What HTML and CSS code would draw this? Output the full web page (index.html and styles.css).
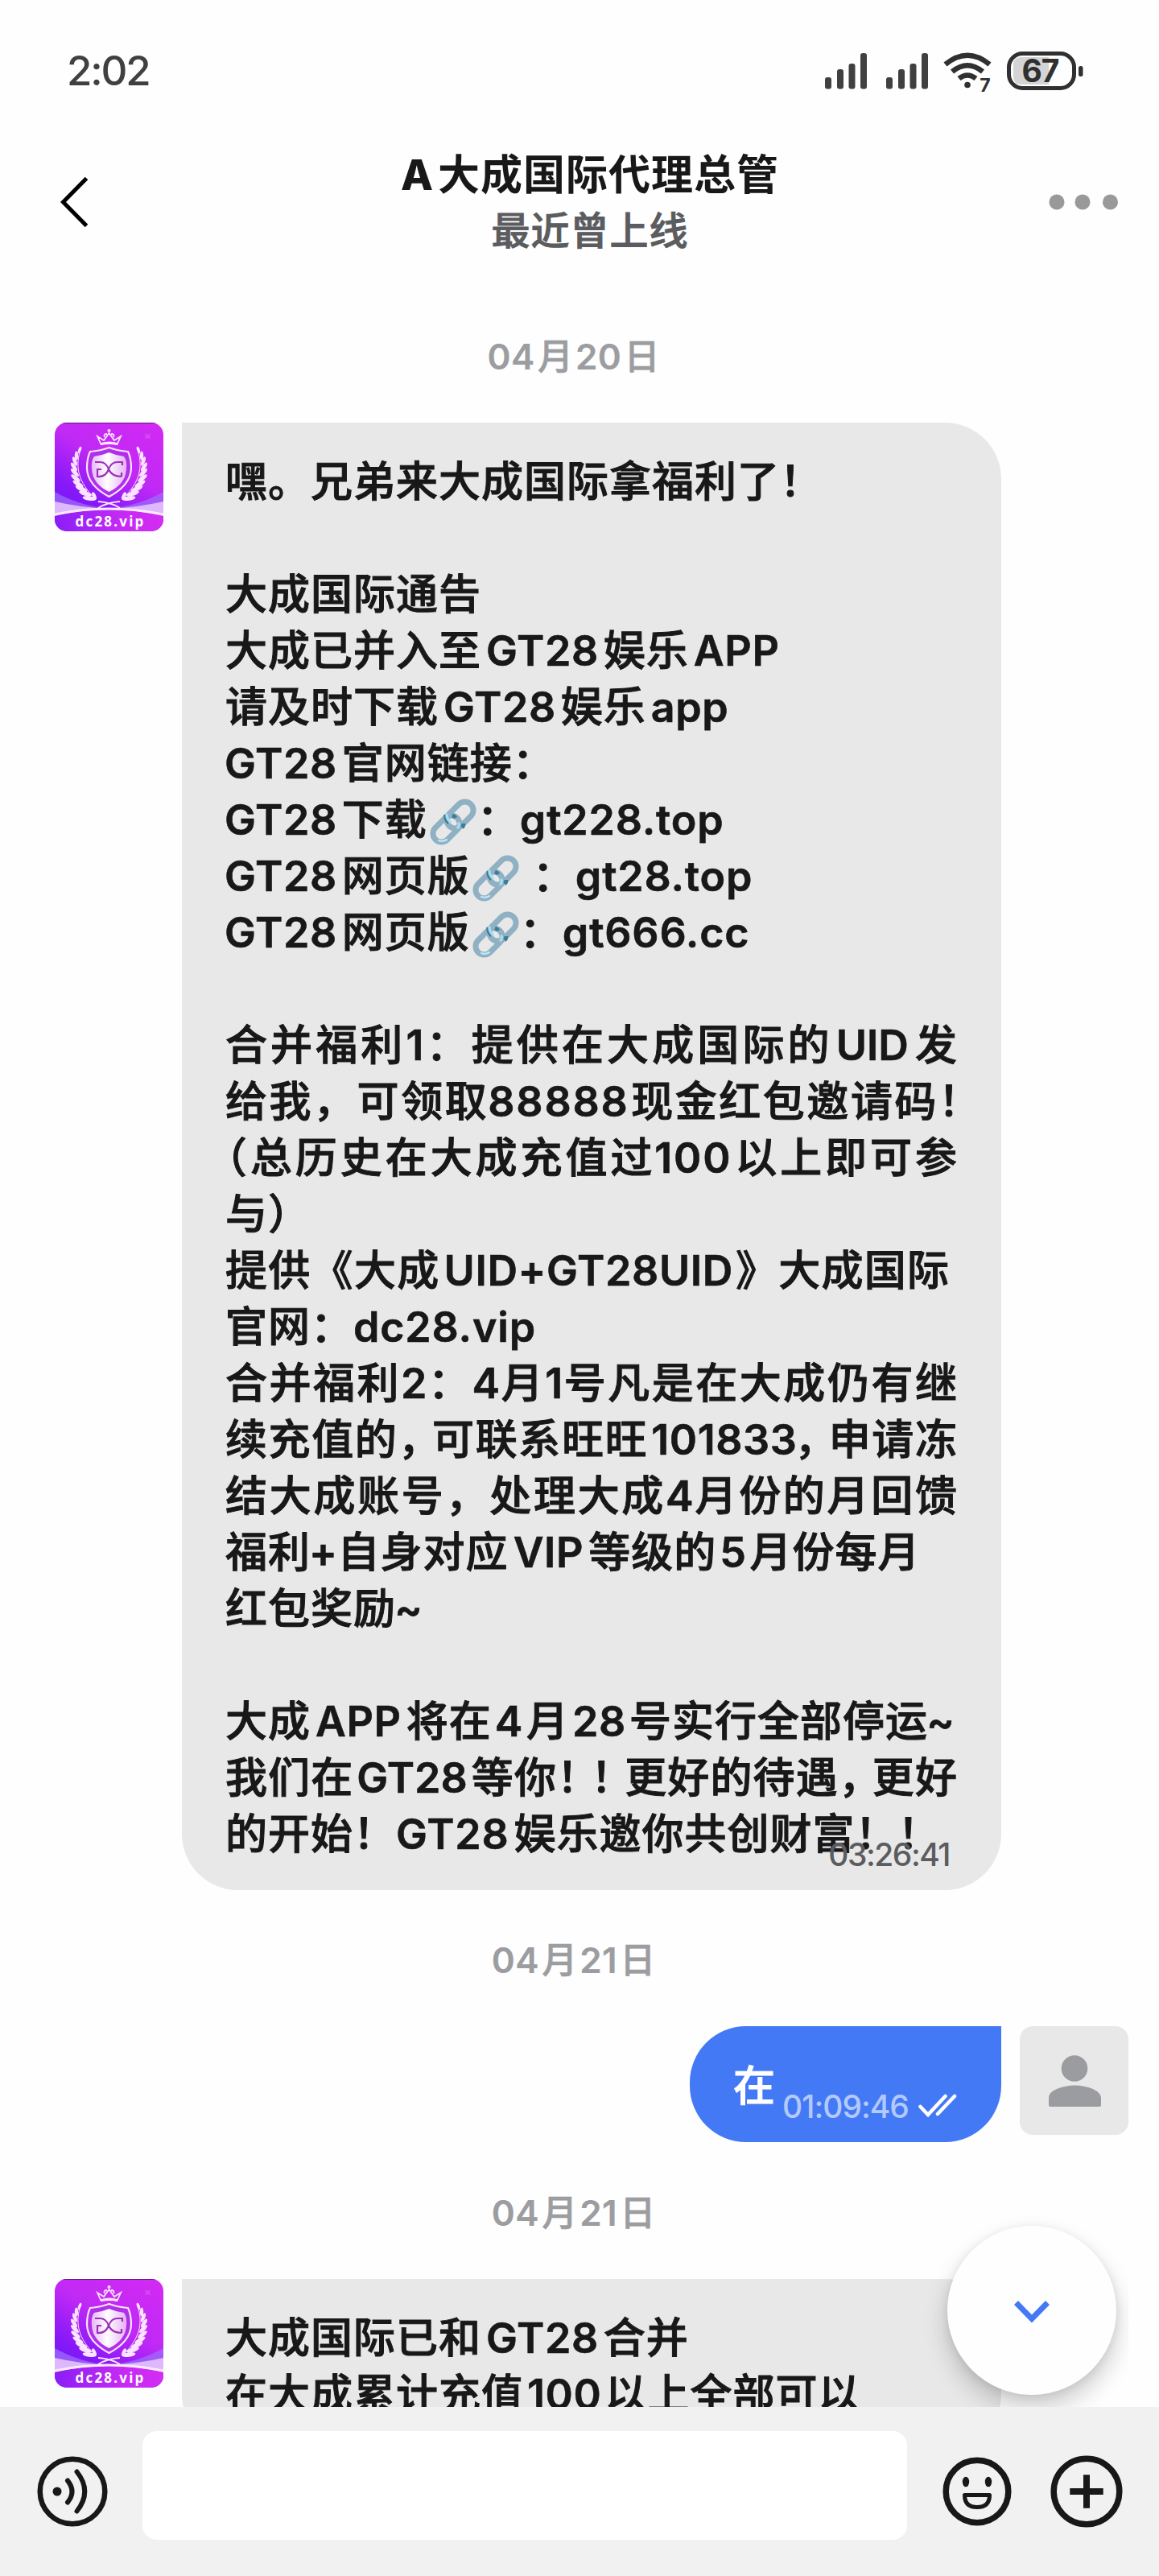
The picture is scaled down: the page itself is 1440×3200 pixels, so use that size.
FILE: index.html
```html
<!DOCTYPE html>
<html lang="zh-CN">
<head>
<meta charset="utf-8">
<title>A大成国际代理总管</title>
<link rel="stylesheet" href="styles.css">
</head>
<body>
<svg class="defs" width="0" height="0" aria-hidden="true">
  <defs>
    <linearGradient id="bg" x1="0.8" y1="0" x2="0.2" y2="1"><stop offset="0" stop-color="#d02af4"/><stop offset="0.4" stop-color="#c029f5"/><stop offset="0.75" stop-color="#8418f8"/><stop offset="1" stop-color="#6a1cfa"/></linearGradient>
    <linearGradient id="foot" x1="0" y1="0" x2="1" y2="0"><stop offset="0" stop-color="#8a1ef8"/><stop offset="0.6" stop-color="#c42af4"/><stop offset="1" stop-color="#d42cf2"/></linearGradient>
    <linearGradient id="metal" x1="0" y1="0" x2="1" y2="0"><stop offset="0" stop-color="#e8b8fa"/><stop offset="0.45" stop-color="#ffffff"/><stop offset="1" stop-color="#e6b0f6"/></linearGradient>
    <clipPath id="round"><rect width="135" height="135" rx="15"/></clipPath>
    <symbol id="laurel" viewBox="0 0 135 135">
      <g fill="#fbe4ff">
        <ellipse cx="31" cy="34" rx="1.8" ry="4.5" transform="rotate(20 31 34)"/>
        <ellipse cx="27" cy="41" rx="2.2" ry="5.5" transform="rotate(-2 27 41)"/>
        <ellipse cx="25" cy="48" rx="2.3" ry="6" transform="rotate(-22 25 48)"/>
        <ellipse cx="24" cy="55" rx="2.4" ry="6.3" transform="rotate(-34 24 55)"/>
        <ellipse cx="25" cy="62" rx="2.5" ry="6.6" transform="rotate(-45 25 62)"/>
        <ellipse cx="26" cy="69" rx="2.6" ry="7" transform="rotate(-52 26 69)"/>
        <ellipse cx="29" cy="76" rx="2.7" ry="7.4" transform="rotate(-59 29 76)"/>
        <ellipse cx="33" cy="82" rx="2.8" ry="8" transform="rotate(-65 33 82)"/>
        <ellipse cx="38" cy="88" rx="2.9" ry="8.2" transform="rotate(-72 38 88)"/>
        <ellipse cx="43" cy="94" rx="2.9" ry="8.5" transform="rotate(-82 43 94)"/>
        <ellipse cx="49" cy="91" rx="2.2" ry="5" transform="rotate(-25 49 91)"/>
      </g>
      <path d="M31 37C26 55 29 74 50 94" fill="none" stroke="#fbe4ff" stroke-width="1"/>
    </symbol>
    <symbol id="badge" viewBox="0 0 135 135">
      <g clip-path="url(#round)">
        <rect width="135" height="135" fill="url(#bg)"/>
        <path d="M0 86Q30 103 67 107Q105 103 135 86V116H0Z" fill="#9e6cfa" opacity=".75"/>
        <path d="M0 98Q30 105 67 107Q105 105 135 98V116H0Z" fill="#ddb8fc"/>
        <path d="M0 116Q67 100 135 116V135H0Z" fill="url(#foot)"/>
        <path d="M0 114Q67 100 135 114" fill="none" stroke="#fbe9ff" stroke-width="3"/>
        <rect x="10" width="115" height="1" fill="#5b1a78"/>
      </g>
      <path d="M112 13l4 2 3-2-1 4 1 3-4-1-3 1 1-3z" fill="#d95af6" opacity=".6"/>
      <use href="#laurel" width="135" height="135"/>
      <use href="#laurel" width="135" height="135" transform="translate(135 0) scale(-1 1)"/>
      <path d="M54 98Q70 99 81 106M81 98Q65 99 54 106" fill="none" stroke="#fbe4ff" stroke-width="2"/>
      <path d="M67.500 31Q78 35 91 36Q95 44 95 57Q94 78 67.500 92Q41 78 40 57Q40 44 44 36Q57 35 67.500 31Z" fill="#b030ea" stroke="#fbe4ff" stroke-width="2.200"/>
      <path d="M67.500 37Q77 41 86 42Q90 47 89 58Q88 76 67.500 86Q47 76 46 58Q45 47 49 42Q58 41 67.500 37Z" fill="url(#metal)"/>
      <g fill="none" stroke="#9b30b8" stroke-width="2.200"><path d="M50 49H56Q64 49 67 58Q71 67 83 67M84 53V49H78Q70 49 67 58Q63 68 53 67V58H58M83 67V62"/></g>
      <g fill="none" stroke="#fbe4ff" stroke-width="1.800"><path d="M53 17l4 9q11-3 21 0l4-9-8 5-6.500-9-6.500 9zM57 27.500q11-3 21 0M62 18q-2-4 3-4M73 18q2-4-3-4"/></g>
      <circle cx="67.500" cy="10" r="2" fill="#fbe4ff"/>
      <text class="badge-text" x="69" y="129" text-anchor="middle">dc28.vip</text>
    </symbol>
    <symbol id="link" viewBox="0 0 58 58">
      <g fill="none" stroke-linecap="round">
        <rect x="-10.500" y="-19" width="21" height="38" rx="10.500" transform="translate(20.500 37.500) rotate(45)" stroke="#8fb1c3" stroke-width="7"/>
        <rect x="-10.500" y="-19" width="21" height="38" rx="10.500" transform="translate(37.500 20.500) rotate(45)" stroke="#8fb1c3" stroke-width="7"/>
        <path d="M28 21q3 1 4 3M42 31q0 3-2 5" stroke="#3e7c93" stroke-width="5" stroke-linecap="butt"/>
        <path d="M20 20q-1 6 4 10" stroke="#3e7c93" stroke-width="5" stroke-linecap="butt"/>
        <path d="M21 20q0 5 4 9M36 31q1 3-1 5" stroke="#a5dcee" stroke-width="3.500"/>
        <path d="M11 52q5 2 10-1" stroke="#bde9f7" stroke-width="2.200"/>
      </g>
    </symbol>
  </defs>
</svg>

<main class="phone">
  <div class="status">
    <span class="clock">2:02</span>
    <svg width="340" height="60" viewBox="1015 58 340 60">
      <g fill="#404040">
        <rect x="1025" y="96" width="8" height="14.500" rx="3"/><rect x="1040" y="86" width="8" height="24.500" rx="3"/><rect x="1054.500" y="79" width="8" height="31.500" rx="3"/><rect x="1069" y="66" width="8" height="44.500" rx="3"/>
        <rect x="1101" y="96" width="8" height="14.500" rx="3"/><rect x="1116" y="86" width="8" height="24.500" rx="3"/><rect x="1130.500" y="79" width="8" height="31.500" rx="3"/><rect x="1145" y="66" width="8" height="44.500" rx="3"/>
      </g>
      <g fill="none" stroke="#303030" stroke-width="6.500"><path d="M1174.500 80Q1202 57.500 1229.500 80M1183 89Q1202 73.500 1221 89M1191.500 97.500Q1202 89.500 1212.500 97.500"/></g>
      <circle cx="1202" cy="105.500" r="3.800" fill="#303030"/>
      <text class="wifi-gen" x="1224" y="113.500" text-anchor="middle">7</text>
      <path d="M1269 71H1303V105H1269Q1259 105 1259 95V81Q1259 71 1269 71Z" fill="#d4d4d4"/>
      <rect x="1253.500" y="66.500" width="81" height="43" rx="17" fill="none" stroke="#303030" stroke-width="5"/>
      <rect x="1340" y="82" width="5.500" height="13" rx="2.500" fill="#303030"/>
      <text class="battery-level" x="1292.500" y="102" text-anchor="middle">67</text>
    </svg>
  </div>

  <header class="header">
    <svg class="back" width="50" height="70" viewBox="70 215.500 50 70"><path d="M107.500 221L78.500 250.500L107.500 280" fill="none" stroke="#000" stroke-width="5"/></svg>
    <div class="titles">
      <h1><span class="la">A</span>大成国际代理总管</h1>
      <p>最近曾上线</p>
    </div>
    <svg width="100" height="30" viewBox="1300 235.500 100 30" fill="#999"><circle cx="1313" cy="250.500" r="9.500"/><circle cx="1345" cy="250.500" r="9.500"/><circle cx="1379.500" cy="250.500" r="9.500"/></svg>
  </header>

  <section class="chat">
    <div class="date"><b>04</b>月<b>20</b>日</div>
    <div class="row">
      <svg class="avatar" width="135" height="135"><use href="#badge"/></svg>
      <div class="bubble">
        <p>嘿。兄弟来大成国际拿福利了！</p>
        <p></p>
        <p>大成国际通告</p>
        <p>大成已并入至<b>GT28</b>娱乐<b>APP</b></p>
        <p>请及时下载<b>GT28</b>娱乐<b>app</b></p>
        <p><b class="first">GT28</b>官网链接：</p>
        <p><b class="first">GT28</b>下载<svg class="link"><use href="#link"/></svg>：<b class="url">gt228.top</b></p>
        <p><b class="first">GT28</b>网页版<svg class="link spaced"><use href="#link"/></svg>：<b class="url">gt28.top</b></p>
        <p><b class="first">GT28</b>网页版<svg class="link"><use href="#link"/></svg>：<b class="url">gt666.cc</b></p>
        <p></p>
        <p class="full">合并福利<b class="digit">1</b>：提供在大成国际的<b>UID</b>发</p>
        <p class="full hang">给我，可领取<b class="wide">88888</b>现金红包邀请码！</p>
        <p class="full"><span class="open">（</span>总历史在大成充值过<b class="wide">100</b>以上即可参</p>
        <p>与）</p>
        <p class="spread">提供《大成<b>UID+GT28UID</b>》大成国际</p>
        <p>官网：<b class="url">dc28.vip</b></p>
        <p class="full">合并福利<b class="digit">2</b>：<b class="digit">4</b>月<b class="digit">1</b>号凡是在大成仍有继</p>
        <p class="full">续充值的<span class="tight">，</span>可联系旺旺<b class="number">101833</b><span class="tight">，</span>申请冻</p>
        <p class="full">结大成账号，处理大成<b class="digit">4</b>月份的月回馈</p>
        <p>福利<b class="sign">+</b>自身对应<b>VIP</b>等级的<b class="digit">5</b>月份每月</p>
        <p>红包奖励<b class="sign">~</b></p>
        <p></p>
        <p>大成<b>APP</b>将在<b class="digit">4</b>月<b class="digit">28</b>号实行全部停运<b class="sign">~</b></p>
        <p class="full">我们在<b>GT28</b>等你<span class="tight">！</span><span class="tight">！</span>更好的待遇<span class="tight">，</span>更好</p>
        <p>的开始！<b class="url">GT28</b>娱乐邀你共创财富！！</p>
        <time>03:26:41</time>
      </div>
    </div>

    <div class="date"><b>04</b>月<b>21</b>日</div>
    <div class="row mine">
      <div class="bubble">
        <p>在</p>
        <time>01:09:46</time>
        <svg class="ticks" width="48" height="30" viewBox="1141 2601 48 30" fill="none" stroke="#fff" stroke-width="4.500" stroke-linecap="round"><path d="M1143.500 2617L1153 2627L1174.500 2604M1165 2626L1186 2604"/></svg>
      </div>
      <svg class="avatar" width="135" height="135" viewBox="1267 2518 135 135"><rect x="1267" y="2518" width="135" height="135" rx="16" fill="#e8e8e8"/><g fill="#9b9ca0"><ellipse cx="1335" cy="2570.500" rx="16.300" ry="16.300"/><path d="M1303 2607Q1303 2600 1313 2596Q1335 2587 1358 2596Q1368 2601 1368 2607V2616Q1368 2618 1366 2618H1305Q1303 2618 1303 2616Z"/></g></svg>
    </div>

    <div class="date"><b>04</b>月<b>21</b>日</div>
    <div class="row">
      <svg class="avatar" width="135" height="135"><use href="#badge"/></svg>
      <div class="bubble">
        <p>大成国际已和<b>GT28</b>合并</p>
        <p>在大成累计充值<b class="digit">100</b>以上全部可以</p>
      </div>
    </div>
    <div class="jump-area">
      <button class="jump"><svg width="50" height="32" viewBox="1257 2853 50 32"><path d="M1262.500 2859.500L1282 2879.500L1301.500 2859.500" fill="none" stroke="#4478f4" stroke-width="7"/></svg></button>
    </div>
  </section>

  <footer class="composer">
    <svg width="90" height="90" viewBox="45 3050 90 90" fill="none" stroke="#181818"><circle cx="90" cy="3095" r="40.300" stroke-width="6.500"/><circle cx="71" cy="3095" r="5.500" fill="#181818" stroke="none"/><path d="M84 3081.500Q95 3095 84 3108.500M95.500 3070.500Q115 3095 95.500 3119.500" stroke-width="6" stroke-linecap="round"/></svg>
    <div class="input"></div>
    <svg width="90" height="90" viewBox="1169 3050 90 90" fill="none" stroke="#181818"><circle cx="1214" cy="3095" r="38.800" stroke-width="7.500"/><g fill="#181818" stroke="none"><ellipse cx="1200" cy="3083" rx="4.200" ry="6.300"/><ellipse cx="1228" cy="3083" rx="4.200" ry="6.300"/></g><path d="M1198.500 3099.500H1229.500Q1229.500 3114.500 1214 3114.500Q1198.500 3114.500 1198.500 3099.500Z" stroke-width="5" stroke-linejoin="round"/></svg>
    <svg width="90" height="90" viewBox="1305 3050 90 90" fill="none" stroke="#181818"><circle cx="1350" cy="3095" r="40.800" stroke-width="7.500"/><path d="M1329.300 3095H1370.700M1350 3074.300V3115.700" stroke-width="8"/></svg>
  </footer>
</main>
</body>
</html>
```
FILE: styles.css
```css
* { box-sizing: border-box; margin: 0; padding: 0; }

body {
  background: #fefefe;
  color: #181818;
  font-family: "Noto Sans CJK SC", sans-serif;
}

.defs { position: absolute; }

.phone {
  display: flex;
  flex-direction: column;
  width: 1440px;
  height: 3200px;
  overflow: hidden;
}

/* Status bar */
.status {
  display: flex;
  justify-content: space-between;
  align-items: center;
  height: 176px;
  padding: 0 85px 0 83px;
}
.clock {
  font: 500 51px/60px Inter, sans-serif;
  letter-spacing: -2.2px;
  color: #404040;
}
.wifi-gen { font: 700 23px Inter, sans-serif; fill: #303030; }
.battery-level { font: 700 39px Inter, sans-serif; letter-spacing: -1px; fill: #303030; }

/* Header */
.header {
  display: flex;
  align-items: center;
  justify-content: space-between;
  height: 149px;
  padding: 0 40px 0 70px;
}
.titles { text-align: center; padding: 0 0 6px 46px; }
.titles h1 {
  height: 70px;
  font-size: 52px;
  font-weight: 700;
  line-height: 70px;
  letter-spacing: 1px;
}
.titles .la { font-family: Inter, sans-serif; font-weight: 800; margin-right: 5px; }
.titles p {
  height: 68px;
  font-size: 48px;
  font-weight: 500;
  line-height: 68px;
  letter-spacing: 1px;
  color: #5b5c60;
  -webkit-text-stroke: .9px currentColor;
}

/* Conversation */
.chat {
  position: relative;
  flex: 1;
  overflow: hidden;
  padding-top: 31px;
}
.date {
  height: 70px;
  margin: 49px 18px 50px 0;
  text-align: center;
  font-size: 44px;
  font-weight: 500;
  line-height: 70px;
  color: #9c9da1;
  -webkit-text-stroke: .7px currentColor;
}
.date:first-child { margin-top: 49px; }
b { font-family: Inter, sans-serif; font-weight: 600; }
.date b { margin: 0 3px; letter-spacing: .5px; -webkit-text-stroke: .2px currentColor; }

.row { display: flex; align-items: flex-start; gap: 23px; padding: 0 68px; }
.avatar { flex: none; display: block; }
.badge-text { font: 700 17px "Open Sans", sans-serif; letter-spacing: 2.2px; fill: #fff; }

.bubble {
  position: relative;
  width: 1018px;
  padding: 35px 54px 38px;
  background: #e8e8e8;
  border-radius: 0 70px 70px 70px;
}
.bubble p {
  height: 70px;
  font-size: 52px;
  font-weight: 500;
  line-height: 70px;
  letter-spacing: 1px;
  white-space: nowrap;
  -webkit-text-stroke: 1px currentColor;
}
.bubble b { margin: 0 6px; letter-spacing: .6px; -webkit-text-stroke: .6px currentColor; }
.bubble b.first { margin-left: -1px; }
.bubble b.url { margin-left: 0; letter-spacing: .8px; }
.bubble b.digit { margin: 0 4px; }
.bubble .full b { margin: 0 4px; letter-spacing: 0; }
.bubble .full b.digit { margin: 0 -1px 0 0; }
.bubble .full b.wide { margin: 0 0 0 -1px; letter-spacing: 1.8px; }
.bubble .full b.number { margin: 0 -5px 0 4px; letter-spacing: .6px; }
.bubble b.sign { margin: 0 0 0 -2px; }
.bubble .spread { letter-spacing: 1.3px; }
.bubble .spread b { margin: 0 3px 0 5px; letter-spacing: .6px; }
.bubble .full {
  width: 909px;
  white-space: normal;
  letter-spacing: 0;
  text-align: justify;
  text-align-last: justify;
}
.bubble .full.hang { width: 938px; }
.open { margin-left: -25px; }
.tight { margin-right: -11px; }
.link { width: 58px; height: 58px; margin: 0 1px 0 3px; vertical-align: -13px; }
.link.spaced { margin-right: 17px; }

.bubble time {
  position: absolute;
  right: 64px;
  bottom: 22px;
  font: 500 39px/44px Inter, sans-serif;
  letter-spacing: -1.5px;
  color: #5b5c60;
}

.mine { justify-content: flex-end; padding-right: 38px; }
.mine .bubble {
  display: flex;
  width: 387px;
  height: 144px;
  padding-top: 36px;
  background: #4479f5;
  color: #fff;
  border-radius: 70px 0 70px 70px;
}
.mine time {
  position: static;
  margin: 42px 0 0 8px;
  letter-spacing: -1px;
  color: #b3c9fc;
}
.mine .ticks { margin: 48px 0 0 12px; flex: none; }

.mine + .date { margin-top: 50px; }

/* Jump-to-latest button floats over the messages; its shadow is cut by its own box */
.jump-area {
  position: absolute;
  right: 38px;
  bottom: 0;
  padding: 45px 15px 15px 45px;
  overflow: hidden;
}
.jump {
  display: flex;
  align-items: center;
  justify-content: center;
  width: 210px;
  height: 210px;
  border: 0;
  border-radius: 50%;
  background: #fefefe;
  box-shadow: 0 16px 30px rgba(0, 0, 0, .2), 0 2px 12px rgba(0, 0, 0, .08);
}

/* Composer */
.composer {
  display: flex;
  flex: none;
  align-items: flex-start;
  height: 210px;
  padding: 30px 45px;
  background: #f1f1f1;
}
.composer svg { margin-top: 30px; flex: none; }
.input {
  flex: 1;
  height: 135px;
  margin: 0 42px;
  border-radius: 18px;
  background: #fff;
}
.composer svg:last-child { margin-left: 46px; }
```
